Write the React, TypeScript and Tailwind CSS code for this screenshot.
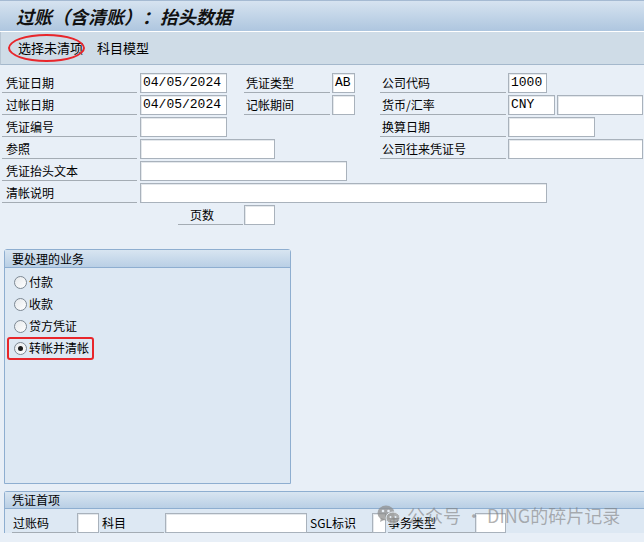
import React from 'react';

const font = { fontFamily: '"Noto Sans CJK SC", "Liberation Sans", sans-serif' };

const Label = ({ text, w, ml = 0, pl = 4 }: { text: string; w: number; ml?: number; pl?: number }) => (
    <div
        className="h-[20px] border-b border-[#a4acb4] text-[12px] leading-[20px] text-black whitespace-nowrap overflow-hidden"
        style={{ width: w, marginLeft: ml, paddingLeft: pl }}
    >
        {text}
    </div>
);

const Field = ({ value = '', w, ml = 0 }: { value?: string; w: number; ml?: number }) => (
    <div
        className="h-[20px] border border-[#a9b2bc] bg-white shadow-[inset_1px_1px_0_#e4e8ec] pl-[2px] text-[13px] leading-[18px] text-black"
        style={{ width: w, marginLeft: ml, fontFamily: '"Liberation Mono", monospace' }}
    >
        {value}
    </div>
);

const Radio = ({ checked = false }: { checked?: boolean }) => (
    <span className="w-[13px] h-[13px] rounded-full border border-[#7d8893] bg-gradient-to-br from-[#e6e9ec] to-white flex items-center justify-center shrink-0">
        {checked && <span className="w-[5px] h-[5px] rounded-full bg-[#1c1c1c]" />}
    </span>
);

const App = () => {
    const options: string[] = ["付款", "收款", "贷方凭证", "转帐并清帐"];

    return (
        <div className="w-[644px] h-[542px] bg-[#e8eff7] overflow-hidden relative" style={font}>
            {/* title */}
            <div className="h-[32px] border-t border-[#a5bad2] border-b border-b-white bg-gradient-to-b from-[#d6e3f0] to-[#aec6df] pl-[16px] flex items-center">
                <span className="text-[18px] font-bold italic leading-none text-[#111]">过账（含清账）：抬头数据</span>
            </div>

            {/* toolbar */}
            <div className="h-[33px] bg-[#cfdce7] border-b border-[#a4b8cc] border-l border-l-[#b8c6d3] flex items-center pl-[17px] gap-[14px] text-[13px] text-black relative">
                <span>选择未清项</span>
                <span>科目模型</span>
                <span className="absolute left-[7px] top-[2px] w-[77px] h-[28px] rounded-[50%] border-2 border-[#e8262b]" />
            </div>

            {/* header fields */}
            <div className="pt-[8px] flex flex-col">
                <div className="h-[22px] flex">
                    <Label text="凭证日期" w={135} ml={2} />
                    <Field value="04/05/2024" w={87} ml={3} />
                    <Label text="凭证类型" w={86} ml={17} pl={2} />
                    <Field value="AB" w={23} ml={2} />
                    <Label text="公司代码" w={126} ml={25} pl={2} />
                    <Field value="1000" w={39} ml={2} />
                </div>
                <div className="h-[22px] flex">
                    <Label text="过帐日期" w={135} ml={2} />
                    <Field value="04/05/2024" w={87} ml={3} />
                    <Label text="记帐期间" w={86} ml={17} pl={2} />
                    <Field w={23} ml={2} />
                    <Label text="货币/汇率" w={126} ml={25} pl={2} />
                    <Field value="CNY" w={47} ml={2} />
                    <Field w={86} ml={2} />
                </div>
                <div className="h-[22px] flex">
                    <Label text="凭证编号" w={135} ml={2} />
                    <Field w={87} ml={3} />
                    <Label text="换算日期" w={126} ml={153} pl={2} />
                    <Field w={87} ml={2} />
                </div>
                <div className="h-[22px] flex">
                    <Label text="参照" w={135} ml={2} />
                    <Field w={135} ml={3} />
                    <Label text="公司往来凭证号" w={126} ml={105} pl={2} />
                    <Field w={135} ml={2} />
                </div>
                <div className="h-[22px] flex">
                    <Label text="凭证抬头文本" w={135} ml={2} />
                    <Field w={207} ml={3} />
                </div>
                <div className="h-[22px] flex">
                    <Label text="清帐说明" w={135} ml={2} />
                    <Field w={407} ml={3} />
                </div>
                <div className="h-[22px] flex">
                    <Label text="页数" w={65} ml={178} pl={12} />
                    <Field w={31} ml={1} />
                </div>
            </div>

            {/* group: 要处理的业务 */}
            <div className="ml-[4px] mt-[22px] w-[287px] h-[235px] border border-[#8eaed0] rounded-t-[3px] bg-[#dde8f3] flex flex-col">
                <div className="h-[18px] border-b border-[#8eaed0] bg-gradient-to-b from-[#d8e5f1] to-[#b9cfe5] pl-[7px] text-[12px] leading-[17px] text-black">
                    要处理的业务
                </div>
                <div className="pt-[3px] flex flex-col">
                    {options.map((opt, index) => (
                        <div key={index} className="h-[22px] flex items-center pl-[9px] gap-[2px] text-[12px] text-black relative">
                            <Radio checked={index === 3} />
                            <span>{opt}</span>
                            {index === 3 && (
                                <span className="absolute left-[2px] top-0 w-[87px] h-[23px] rounded-[3px] border-2 border-[#e8262b]" />
                            )}
                        </div>
                    ))}
                </div>
            </div>

            {/* group: 凭证首项 */}
            <div className="ml-[4px] mt-[7px] w-[660px] border-t border-l border-[#8eaed0] rounded-tl-[3px] bg-[#dde8f3] flex flex-col">
                <div className="h-[17px] border-b border-[#8eaed0] bg-gradient-to-b from-[#d8e5f1] to-[#b9cfe5] pl-[7px] text-[12px] leading-[16px] text-black">
                    凭证首项
                </div>
                <div className="h-[24px] pt-[4px] flex">
                    <Label text="过账码" w={64} ml={7} pl={1} />
                    <Field w={22} ml={1} />
                    <Label text="科目" w={64} ml={1} pl={2} />
                    <Field w={142} ml={1} />
                    <Label text="SGL标识" w={65} pl={3} />
                    <Field w={14} />
                    <Label text="事务类型" w={87} ml={2} pl={0} />
                    <Field w={31} />
                </div>
            </div>

            {/* watermark */}
            <div className="absolute left-[377px] top-[504px] flex items-center gap-[6px] pointer-events-none">
                <svg width="24" height="22" viewBox="0 0 24 22">
                    <ellipse cx="9" cy="9" rx="8.5" ry="7.5" fill="#8f8f8f" fillOpacity="0.75" />
                    <path d="M4 14 L3 18 L8 15.5 Z" fill="#8f8f8f" fillOpacity="0.75" />
                    <ellipse cx="16" cy="14" rx="7" ry="6" fill="#a3a3a3" fillOpacity="0.85" stroke="#e3eaf1" strokeWidth="1" />
                    <circle cx="6" cy="7" r="1.3" fill="#e8eff7" />
                    <circle cx="11.5" cy="7" r="1.3" fill="#e8eff7" />
                    <circle cx="13.5" cy="13" r="1" fill="#e8eff7" />
                    <circle cx="18.5" cy="13" r="1" fill="#e8eff7" />
                </svg>
                <span className="text-[18px] leading-none text-[#7f7f7f]/60 whitespace-nowrap">
                    公众号 · DING的碎片记录
                </span>
            </div>
        </div>
    );
};

export default App;
